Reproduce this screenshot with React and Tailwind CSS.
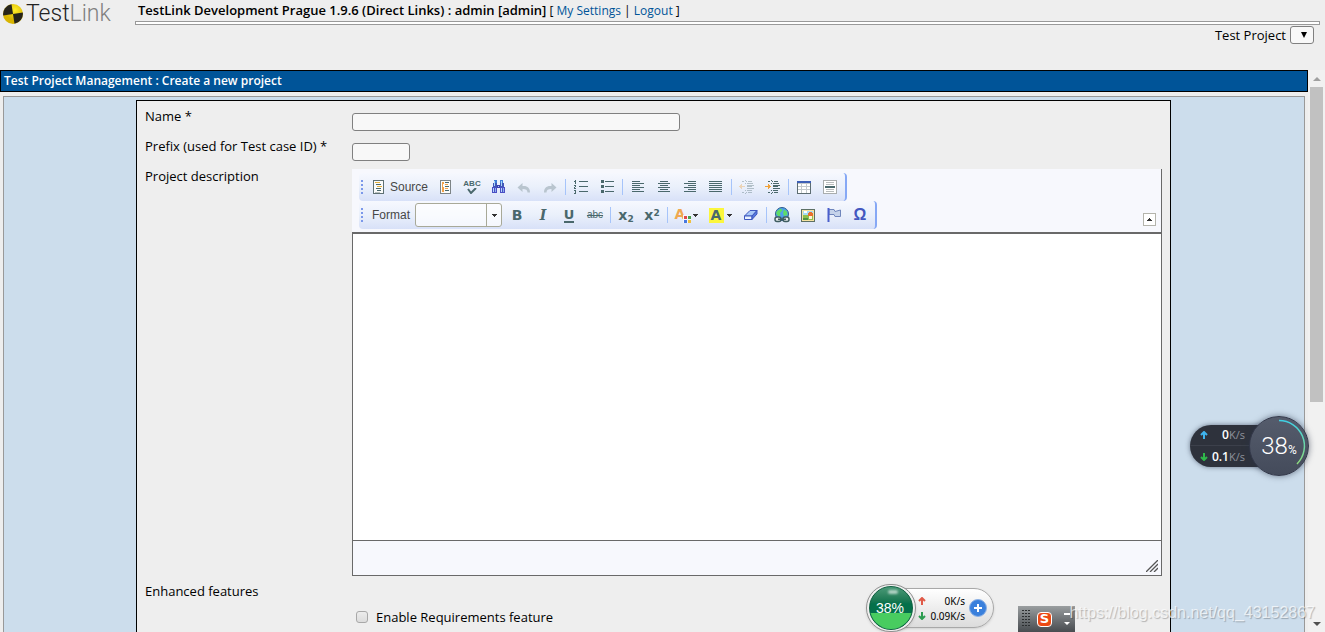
import React, { useState } from "react";

const ink = "#4a686c";

// rows: list of [x, y, width, height, color]
function Pixels({ rows, className }) {
  return (
    <svg
      viewBox="0 0 16 16"
      shapeRendering="crispEdges"
      className={`w-4 h-4 ${className || ""}`}
      aria-hidden="true"
    >
      {rows.map(([x, y, w, h, color], i) => (
        <rect key={i} x={x} y={y} width={w} height={h} fill={color || ink} />
      ))}
    </svg>
  );
}

function SourceIcon() {
  return (
    <Pixels
      rows={[
        [3, 1, 11, 14, "#5f7174"],
        [4, 2, 9, 12, "#fbfcfb"],
        [5, 3, 5, 1, "#e6b23c"],
        [6, 5, 5, 1],
        [7, 7, 5, 1, "#e6b23c"],
        [6, 9, 5, 1],
        [7, 11, 4, 1],
        [5, 13, 5, 1, "#b8c0c0"],
      ]}
    />
  );
}

function TemplateIcon() {
  return (
    <Pixels
      rows={[
        [2, 1, 11, 14, "#7d8486"],
        [3, 2, 9, 12, "#fbfcfb"],
        [4, 3, 2, 10, "#f2a24a"],
        [5, 5, 1, 3, "#fbfcfb"],
        [7, 3, 4, 1],
        [7, 5, 3, 1, "#f2a24a"],
        [7, 7, 4, 1],
        [7, 9, 3, 1, "#f2a24a"],
        [7, 11, 4, 1],
      ]}
    />
  );
}

function FindIcon() {
  return (
    <Pixels
      rows={[
        [4, 1, 3, 3, "#3f7fd8"],
        [10, 1, 3, 3, "#3f7fd8"],
        [3, 4, 4, 4, "#4056b8"],
        [10, 4, 4, 4, "#4056b8"],
        [4, 2, 1, 5, "#a8d4f8"],
        [11, 2, 1, 5, "#a8d4f8"],
        [7, 6, 3, 3, "#3b3fae"],
        [2, 8, 5, 6, "#4a4fc4"],
        [10, 8, 5, 6, "#4a4fc4"],
        [3, 9, 1, 4, "#b8d8fa"],
        [5, 9, 1, 4, "#8fb0f0"],
        [11, 9, 1, 4, "#b8d8fa"],
        [13, 9, 1, 4, "#8fb0f0"],
        [8, 7, 1, 1, "#a8c4f8"],
      ]}
    />
  );
}

function UndoIcon({ flip }) {
  return (
    <svg viewBox="0 0 16 16" className={flip ? "w-4 h-4 -scale-x-100" : "w-4 h-4"} aria-hidden="true">
      <path d="M1.5 8.5 L6.5 4 V7 C11.5 6.5 14 9 14 13.5 H11.5 C11.5 11 10 10 6.5 10 V13 Z" fill="#b9c5cf" />
    </svg>
  );
}

function OrderedIcon() {
  return (
    <Pixels
      rows={[
        [2, 1, 1, 4], [1, 2, 1, 1],
        [1, 6, 2, 1], [2, 7, 1, 1], [1, 8, 1, 1], [1, 9, 2, 1],
        [1, 11, 2, 1], [2, 12, 1, 3], [1, 14, 1, 1],
        [6, 2, 9, 1], [6, 7, 9, 1], [6, 12, 9, 1],
      ]}
    />
  );
}

function BulletIcon() {
  return (
    <Pixels
      rows={[
        [2, 1, 3, 3], [2, 6, 3, 3], [2, 11, 3, 3],
        [6, 2, 9, 1], [6, 7, 9, 1], [6, 12, 9, 1],
      ]}
    />
  );
}

function AlignIcon({ side }) {
  const widths = side === "justify" ? [13, 13, 13, 13, 13, 13] : [8, 12, 8, 12, 8, 12];
  return (
    <Pixels
      rows={widths.map((w, i) => {
        const x = side === "right" ? 14 - w : side === "center" ? 8 - w / 2 : side === "justify" ? 1 : 2;
        return [x, 2 + i * 2, w, 1];
      })}
    />
  );
}

function IndentIcon({ out }) {
  return (
    <Pixels
      className={out ? "opacity-35" : ""}
      rows={[
        [3, 2, 2, 1], [7, 2, 1, 1], [9, 2, 4, 1],
        [8, 4, 6, 1], [8, 6, 7, 1], [8, 7, 5, 1], [8, 9, 7, 1], [8, 11, 5, 1],
        [3, 13, 2, 1], [7, 13, 1, 1], [9, 13, 4, 1],
        [6, 1, 1, 1], [6, 4, 1, 1], [6, 11, 1, 1], [6, 14, 1, 1],
        [0, 7, 6, 1, "#f0a23a"],
        out ? [1, 6, 1, 3, "#f0a23a"] : [4, 6, 1, 3, "#f0a23a"],
        out ? [2, 5, 1, 5, "#f0a23a"] : [3, 5, 1, 5, "#f0a23a"],
      ]}
    />
  );
}

function TableIcon() {
  return (
    <Pixels
      rows={[
        [1, 2, 14, 13, "#5d6d72"],
        [1, 2, 14, 2, "#3d5fb5"],
        [2, 4, 12, 10, "#c3c9cc"],
        [2, 5, 3, 2, "#ffffff"], [6, 5, 4, 2, "#ffffff"], [11, 5, 3, 2, "#ffffff"],
        [2, 8, 3, 2, "#ffffff"], [6, 8, 4, 2, "#ffffff"], [11, 8, 3, 2, "#ffffff"],
        [2, 11, 3, 3, "#ffffff"], [6, 11, 4, 3, "#ffffff"], [11, 11, 3, 3, "#ffffff"],
      ]}
    />
  );
}

function RuleIcon() {
  return (
    <Pixels
      rows={[
        [1, 1, 14, 14, "#a9adae"],
        [2, 2, 12, 12, "#ffffff"],
        [4, 3, 8, 1, "#b8bcbd"], [4, 5, 8, 1, "#b8bcbd"],
        [3, 7, 10, 2],
        [4, 10, 8, 1, "#b8bcbd"], [4, 12, 8, 1, "#b8bcbd"],
      ]}
    />
  );
}

function SpellIcon() {
  return (
    <span className="flex flex-col items-center font-['Liberation_Sans_Narrow','Liberation_Sans'] text-[8px] leading-[8px] font-bold">
      ABC
      <svg viewBox="0 0 10 6" className="w-[10px] h-[6px]" aria-hidden="true">
        <path d="M1 1 L4 5 L9 0" fill="none" stroke={ink} strokeWidth="2" />
      </svg>
    </span>
  );
}

function EraserIcon() {
  return (
    <svg viewBox="0 0 16 16" className="w-4 h-4" aria-hidden="true">
      <path d="M1.5 9 L7 3.5 H14 L9 9 Z" fill="#a9c9f8" stroke="#3f58c0" />
      <path d="M1.5 9 H9 V12.5 H1.5 Z" fill="#e8f2ff" stroke="#3f58c0" />
      <path d="M9 9 L14 3.5 V7 L9 12.5 Z" fill="#5578dd" stroke="#3f58c0" />
    </svg>
  );
}

function LinkIcon() {
  return (
    <svg viewBox="0 0 16 16" className="w-4 h-4" aria-hidden="true">
      <circle cx="8" cy="7" r="6.5" fill="#4fa0ee" stroke="#2d5c8c" />
      <path d="M3 4 L7 1.5 L8.5 3.5 L6 6 L6.5 9 L4 9 L2 6.5 Z M10 2.5 L13 4.5 L13.5 8 L10 9 L9 6 Z" fill="#5fdc68" />
      <rect x="1" y="10" width="6" height="4.5" rx="2" fill="#e8eeee" stroke="#3f5c60" strokeWidth="1.5" />
      <rect x="9" y="10" width="6" height="4.5" rx="2" fill="#e8eeee" stroke="#3f5c60" strokeWidth="1.5" />
      <path d="M4 12.3 H12" stroke="#3f5c60" strokeWidth="1.6" />
    </svg>
  );
}

function ImageIcon() {
  return (
    <Pixels
      rows={[
        [1, 2, 14, 13, "#5d7064"],
        [2, 3, 12, 11, "#f6e3a0"],
        [3, 4, 10, 4, "#a8dcf4"],
        [4, 4, 3, 2, "#ffffff"],
        [3, 8, 10, 5, "#8fc04c"],
        [3, 11, 5, 2, "#4f9440"],
        [8, 6, 5, 3, "#e8702e"],
        [9, 5, 3, 1, "#e8702e"],
        [9, 9, 3, 3, "#fff3dc"],
      ]}
    />
  );
}

function FlagIcon() {
  return (
    <svg viewBox="0 0 16 16" className="w-4 h-4" aria-hidden="true">
      <path d="M3 2.5 H8 L9 4.5 L14.5 3 V9.5 H9 L8 7.5 H3 Z" fill="#c5d3ea" stroke="#6f86bc" />
      <path d="M2.5 1 V15" stroke="#4a5fcc" strokeWidth="2" />
    </svg>
  );
}

function Caret({ className }) {
  return (
    <svg viewBox="0 0 5 3" className={`w-[5px] h-[3px] ${className || ""}`} shapeRendering="crispEdges" aria-hidden="true">
      <path d="M0 0 H5 L2.5 3 Z" fill="#333333" />
    </svg>
  );
}

function Tool({ label, children, wide }) {
  return (
    <button
      type="button"
      aria-label={label}
      title={label}
      className={`flex items-center justify-center gap-[2px] h-[26px] shrink-0 text-[#4a686c] hover:bg-[#d3defa] ${
        wide ? "w-[34px] pr-[2px]" : "w-[26px]"
      }`}
    >
      {children}
    </button>
  );
}

function Separator() {
  return <span className="flex justify-center w-[5px] shrink-0"><span className="w-px h-4 bg-[#a6c4fa]" /></span>;
}

function ToolGroup({ children }) {
  return (
    <div className="flex items-center w-fit h-7 pr-[2px] rounded-sm border-r-2 border-r-[#86a8f5] bg-linear-to-b from-[#f6f8fe] via-[#eaf0fb] to-[#d8e1f8]">
      <svg viewBox="0 0 6 16" className="w-[6px] h-4 shrink-0" shapeRendering="crispEdges" aria-hidden="true">
        {[1, 5, 9, 13].map((y) => (
          <rect key={y} x="2" y={y} width="2" height="2" fill="#7b98ea" />
        ))}
      </svg>
      {children}
    </div>
  );
}

function Editor() {
  return (
    <div className="bg-[#f7f8fd] border-r border-[#696969]">
      <div className="flex items-end justify-between h-[63px] pl-[7px] pr-[5px] pb-[3px]">
        <div className="flex flex-col font-['Liberation_Sans',sans-serif] text-xs text-[#474747]">
          <ToolGroup>
            <button type="button" className="flex items-center gap-1 w-[68px] h-[26px] pl-[5px]">
              <SourceIcon />
              <span>Source</span>
            </button>
            <Tool label="Templates"><TemplateIcon /></Tool>
            <Tool label="Check Spelling"><SpellIcon /></Tool>
            <Tool label="Find"><FindIcon /></Tool>
            <Tool label="Undo"><UndoIcon /></Tool>
            <Tool label="Redo"><UndoIcon flip /></Tool>
            <Separator />
            <Tool label="Numbered List"><OrderedIcon /></Tool>
            <Tool label="Bulleted List"><BulletIcon /></Tool>
            <Separator />
            <Tool label="Align Left"><AlignIcon side="left" /></Tool>
            <Tool label="Center"><AlignIcon side="center" /></Tool>
            <Tool label="Align Right"><AlignIcon side="right" /></Tool>
            <Tool label="Justify"><AlignIcon side="justify" /></Tool>
            <Separator />
            <Tool label="Decrease Indent"><IndentIcon out /></Tool>
            <Tool label="Increase Indent"><IndentIcon /></Tool>
            <Separator />
            <Tool label="Table"><TableIcon /></Tool>
            <Tool label="Horizontal Line"><RuleIcon /></Tool>
          </ToolGroup>
          <ToolGroup>
            <label htmlFor="format" className="w-[50px] pl-[7px]">Format</label>
            <span className="relative flex mr-[2px]">
              <select id="format" className="appearance-none w-[87px] h-6 rounded-[3px] border border-[#a8a998] bg-white/70" />
              <span className="absolute right-0 inset-y-0 flex items-center justify-center w-4 border-l border-[#a8a998] pointer-events-none">
                <Caret />
              </span>
            </span>
            <Tool label="Bold"><span className="font-['DejaVu_Sans'] text-sm font-bold">B</span></Tool>
            <Tool label="Italic"><span className="font-['DejaVu_Serif'] text-sm font-bold italic">I</span></Tool>
            <Tool label="Underline"><span className="font-['DejaVu_Sans'] text-[13px] leading-[13px] font-bold border-b-2 border-[#4a686c]">U</span></Tool>
            <Tool label="Strike Through"><span className="text-[10px] line-through">abc</span></Tool>
            <Separator />
            <Tool label="Subscript"><span className="font-['DejaVu_Sans'] text-sm leading-4 font-bold">x<sub className="text-[9px]">2</sub></span></Tool>
            <Tool label="Superscript"><span className="font-['DejaVu_Sans'] text-sm leading-4 font-bold">x<sup className="text-[9px]">2</sup></span></Tool>
            <Separator />
            <Tool label="Text Color" wide>
              <span className="relative w-4 h-4 text-left font-['DejaVu_Sans'] text-sm leading-[14px] font-bold text-[#f0a850]">
                A
                <svg viewBox="0 0 8 8" className="absolute right-0 bottom-0 w-2 h-2" shapeRendering="crispEdges" aria-hidden="true">
                  <path d="M0 0h8v8h-8z" fill="#f4f7fe" />
                  <path d="M1 1h3v3h-3z" fill="#e04848" />
                  <path d="M5 1h3v3h-3z" fill="#4ca04c" />
                  <path d="M1 5h3v3h-3z" fill="#4878e0" />
                  <path d="M5 5h3v3h-3z" fill="#f0c040" />
                </svg>
              </span>
              <Caret />
            </Tool>
            <Tool label="Background Color" wide>
              <span className="w-[15px] h-[15px] mr-px bg-[#fbf63e] font-['DejaVu_Sans'] text-sm leading-[15px] font-bold">A</span>
              <Caret />
            </Tool>
            <Tool label="Remove Format"><EraserIcon /></Tool>
            <Separator />
            <Tool label="Link"><LinkIcon /></Tool>
            <Tool label="Image"><ImageIcon /></Tool>
            <Tool label="Anchor"><FlagIcon /></Tool>
            <Tool label="Special Character"><span className="font-['Liberation_Sans'] text-base leading-4 font-bold text-[#4358c0]">Ω</span></Tool>
          </ToolGroup>
        </div>
        <button
          type="button"
          aria-label="Collapse Toolbar"
          className="flex items-center justify-center w-[13px] h-[13px] mb-[3px] border border-[#b4b4ac] bg-white"
        >
          <Caret className="rotate-180" />
        </button>
      </div>
      <div className="border-l border-t-2 border-b border-[#696969]">
        <textarea aria-label="Project description" className="block w-full h-[306px] bg-white resize-none outline-none" />
        <div className="flex items-end justify-end h-[35px] p-[3px] border-t border-[#696969]">
          <svg viewBox="0 0 12 12" className="w-3 h-3" aria-hidden="true">
            <path d="M0 12 L12 0 M4 12 L12 4 M8 12 L12 8" stroke="#555555" strokeWidth="1.3" />
          </svg>
        </div>
      </div>
    </div>
  );
}

function Header() {
  return (
    <header className="flex h-[70px] shrink-0">
      <div className="flex items-center gap-[3px] w-[135px] h-7 pl-[3px] font-['Roboto'] text-[23px] font-light text-[#222222]">
        <svg viewBox="0 0 20 20" className="w-5 h-5" aria-hidden="true">
          <defs>
            <radialGradient id="yellow" cx="0.6" cy="0.3">
              <stop offset="0" stopColor="#ffee2a" />
              <stop offset="1" stopColor="#d8b400" />
            </radialGradient>
          </defs>
          <circle cx="10" cy="10" r="10" fill="url(#yellow)" />
          <path d="M10 10 L8.5 0.2 A10 10 0 0 0 0.2 11.5 Z" fill="#26241c" />
          <path d="M10 10 L11.5 19.8 A10 10 0 0 0 19.8 8.5 Z" fill="#26241c" />
        </svg>
        <span>Test<span className="text-[#808080]">Link</span></span>
      </div>
      <div className="flex-1 pr-[5px]">
        <div className="h-[21px] pl-[3px] text-xs leading-[21px]">
          <span className="text-[13px] font-semibold">TestLink Development Prague 1.9.6 (Direct Links) : admin [admin]</span>
          {" [ "}
          <a href="#settings" className="text-[#005498]">My Settings</a>
          {" | "}
          <a href="#logout" className="text-[#005498]">Logout</a>
          {" ]"}
        </div>
        <div className="h-1 border border-[#999999] bg-white" />
        <div className="flex items-center justify-end gap-1 pt-px pr-[6px]">
          <label htmlFor="project">Test Project</label>
          <span className="relative flex">
            <select id="project" className="appearance-none w-6 h-[18px] rounded-[3px] border border-[#808080] bg-[#f8f8f8]" />
            <svg viewBox="0 0 6 6" className="absolute left-[11px] top-[6px] w-[6px] h-[6px] pointer-events-none" aria-hidden="true">
              <path d="M0 0 H6 L3 6 Z" fill="#000000" />
            </svg>
          </span>
        </div>
      </div>
    </header>
  );
}

function ScrollBar() {
  return (
    <div className="flex flex-col items-center justify-between w-[17px] shrink-0 bg-[#f1f1f1]">
      <div className="flex flex-col items-center">
        <span className="flex items-center justify-center h-[17px]">
          <svg viewBox="0 0 8 4" className="w-2 h-1" aria-hidden="true"><path d="M4 0 L8 4 H0 Z" fill="#a0a0a0" /></svg>
        </span>
        <span className="w-[13px] h-[315px] bg-[#c1c1c1]" />
      </div>
      <span className="flex items-center justify-center h-[17px]">
        <svg viewBox="0 0 8 4" className="w-2 h-1" aria-hidden="true"><path d="M4 4 L8 0 H0 Z" fill="#505050" /></svg>
      </span>
    </div>
  );
}

function Arrow({ color, down }) {
  return (
    <svg viewBox="0 0 8 8" className={`w-2 h-2 ${down ? "rotate-180" : ""}`} aria-hidden="true">
      <path d="M4 8 V1 M1 4 L4 1 L7 4" fill="none" stroke={color} strokeWidth="2" />
    </svg>
  );
}

// dark network meter on the right edge
function DarkMeter() {
  return (
    <div className="absolute right-4 bottom-[156px] flex items-center w-[119px] h-[60px] font-['Open_Sans']">
      <div className="w-20 h-[42px] rounded-l-full bg-[#2e323c] shadow-[0_0_5px_rgba(40,50,70,0.6)] text-xs text-white">
        {[
          { value: "0", color: "#3fb4ee", down: false },
          { value: "0.1", color: "#2fb84a", down: true },
        ].map((row) => (
          <div key={row.value} className="flex items-center justify-between h-[21px] pl-[10px] pr-[25px] odd:border-b border-[#3c404b]">
            <Arrow color={row.color} down={row.down} />
            <span className="whitespace-nowrap font-semibold">{row.value}<span className="text-[11px] font-normal text-[#8e929c]">K/s</span></span>
          </div>
        ))}
      </div>
      <div className="absolute right-0 top-0 flex items-center justify-center w-[60px] h-[60px] rounded-full border border-[#33384a] bg-linear-to-b from-[#555c6c] to-[#444b5b] shadow-[0_0_6px_rgba(40,50,70,0.6)] text-white">
        <span className="font-['Roboto'] font-light text-2xl">38<span className="text-xs font-normal">%</span></span>
        <svg viewBox="0 0 60 60" className="absolute -left-px -top-px w-[60px] h-[60px]" aria-hidden="true">
          <defs>
            <linearGradient id="ring" x1="0" y1="0" x2="0" y2="1">
              <stop offset="0" stopColor="#3fd0e4" />
              <stop offset="1" stopColor="#8fdc7c" />
            </linearGradient>
          </defs>
          <path d="M30 4.5 A25.5 25.5 0 0 1 48 48" fill="none" stroke="url(#ring)" strokeWidth="1.5" />
        </svg>
      </div>
    </div>
  );
}

// light network meter at the bottom
function LightMeter() {
  return (
    <div className="absolute right-[331px] bottom-0 flex items-center w-[128px] h-[48px] font-['Noto_Sans'] text-[10px] text-black">
      <div className="flex items-center justify-end w-[118px] h-10 ml-[10px] pr-[6px] gap-1 rounded-full border border-[#a8a8a8] bg-linear-to-b from-white to-[#dcdcdc] shadow">
        <div className="w-[47px]">
          <div className="flex items-center justify-between h-[15px]"><Arrow color="#e05a48" />0K/s</div>
          <div className="flex items-center justify-between h-[15px]"><Arrow color="#2c9c50" down />0.09K/s</div>
        </div>
        <svg viewBox="0 0 18 18" className="w-[18px] h-[18px]" aria-hidden="true">
          <circle cx="9" cy="9" r="8.5" fill="#3a80dc" stroke="#8cb0e4" />
          <path d="M9 5 V13 M5 9 H13" stroke="#ffffff" strokeWidth="2" />
        </svg>
      </div>
      <div className="absolute left-0 top-0 flex items-center justify-center w-[50px] h-12 rounded-full border border-[#909090] bg-[#f0f0f0] shadow">
        <div className="relative flex items-center justify-center w-11 h-11 rounded-full border border-[#0d6040] bg-linear-to-b from-[#4a9a78] from-0% via-[#04704a] via-40% to-[#04704a] to-100% overflow-hidden">
          <span className="absolute inset-x-0 bottom-0 h-4 bg-[#48cc60]" />
          <span className="absolute left-[18px] top-[3px] w-[10px] h-1 rounded-full bg-white/60 blur-[1px]" />
          <span className="relative pr-[2px] font-['Liberation_Sans'] text-sm text-white">38%</span>
        </div>
      </div>
    </div>
  );
}

function InputBar() {
  return (
    <div className="absolute right-[250px] bottom-0 flex items-center gap-[7px] w-[57px] h-[26px] px-1 bg-linear-to-b from-[#9a9ea0] to-[#484c50]">
      <svg viewBox="0 0 8 18" className="w-2 h-[18px] shrink-0" shapeRendering="crispEdges" aria-hidden="true">
        {[0, 3, 6, 9, 12, 15].map((y) =>
          [0, 3, 6].map((x) => <rect key={`${x}-${y}`} x={x} y={y} width="2" height="1" fill="#2c2f31" />)
        )}
      </svg>
      <span className="flex items-center justify-center w-[15px] h-[15px] shrink-0 rounded-sm border border-white bg-[#ec4a14] font-['DejaVu_Sans'] text-[13px] font-bold text-white">S</span>
      <svg viewBox="0 0 8 14" className="w-2 h-[14px] ml-auto shrink-0" aria-hidden="true">
        <path d="M1 1 H7 V3 H1 Z M1 10 H7 L4 13 Z" fill="#ffffff" />
      </svg>
    </div>
  );
}

export default function App() {
  const [name, setName] = useState("");
  const [prefix, setPrefix] = useState("");

  return (
    <div className="relative flex flex-col h-screen overflow-hidden bg-[#eeeeee] font-['Open_Sans','Noto_Sans',sans-serif] text-[13px] leading-4 text-black">
      <Header />

      <div className="flex flex-1 min-h-0">
        <main className="flex flex-col flex-1 min-w-0">
          <h1 className="h-[22px] shrink-0 px-[3px] border border-black bg-[#005498] text-xs leading-5 font-semibold text-white">
            Test Project Management : Create a new project
          </h1>
          <div className="flex-1 min-h-0 mx-[3px] mt-1 pt-[3px] overflow-hidden border border-b-0 border-[#999999] bg-[#ccddec]">
            <form className="grid grid-cols-[207px_1fr] ml-[132px] mr-[133px] px-2 pt-[7px] border border-black bg-[#eeeeee]">
              <label htmlFor="name" className="h-[30px]">Name *</label>
              <div className="pt-[5px]">
                <input
                  id="name"
                  value={name}
                  onChange={(e) => setName(e.target.value)}
                  className="block w-[328px] h-[18px] px-1 rounded-[3px] border border-[#808080] bg-[#f8f8f8]"
                />
              </div>

              <label htmlFor="prefix" className="h-[30px]">Prefix (used for Test case ID) *</label>
              <div className="pt-[5px]">
                <input
                  id="prefix"
                  value={prefix}
                  onChange={(e) => setPrefix(e.target.value)}
                  className="block w-[58px] h-[18px] px-1 rounded-[3px] border border-[#808080] bg-[#f8f8f8]"
                />
              </div>

              <div>Project description</div>
              <div className="pt-px"><Editor /></div>

              <div className="pt-[7px]">Enhanced features</div>
              <div />

              <div />
              <div className="flex items-center gap-2 h-9 pl-1">
                <input
                  id="requirements"
                  type="checkbox"
                  className="appearance-none w-3 h-3 rounded-[3px] border border-[#a8a8a8] bg-linear-to-b from-[#ececec] to-[#dcdcdc] checked:bg-[#005498]"
                />
                <label htmlFor="requirements">Enable Requirements feature</label>
              </div>
            </form>
          </div>
        </main>
        <ScrollBar />
      </div>

      <DarkMeter />
      <LightMeter />
      <InputBar />
      <div className="absolute right-[10px] bottom-[10px] font-['Liberation_Sans'] text-base leading-[18px] text-white/70 [text-shadow:1px_1px_1px_rgba(0,0,0,0.25)] pointer-events-none">
        https://blog.csdn.net/qq_43152867
      </div>
    </div>
  );
}
